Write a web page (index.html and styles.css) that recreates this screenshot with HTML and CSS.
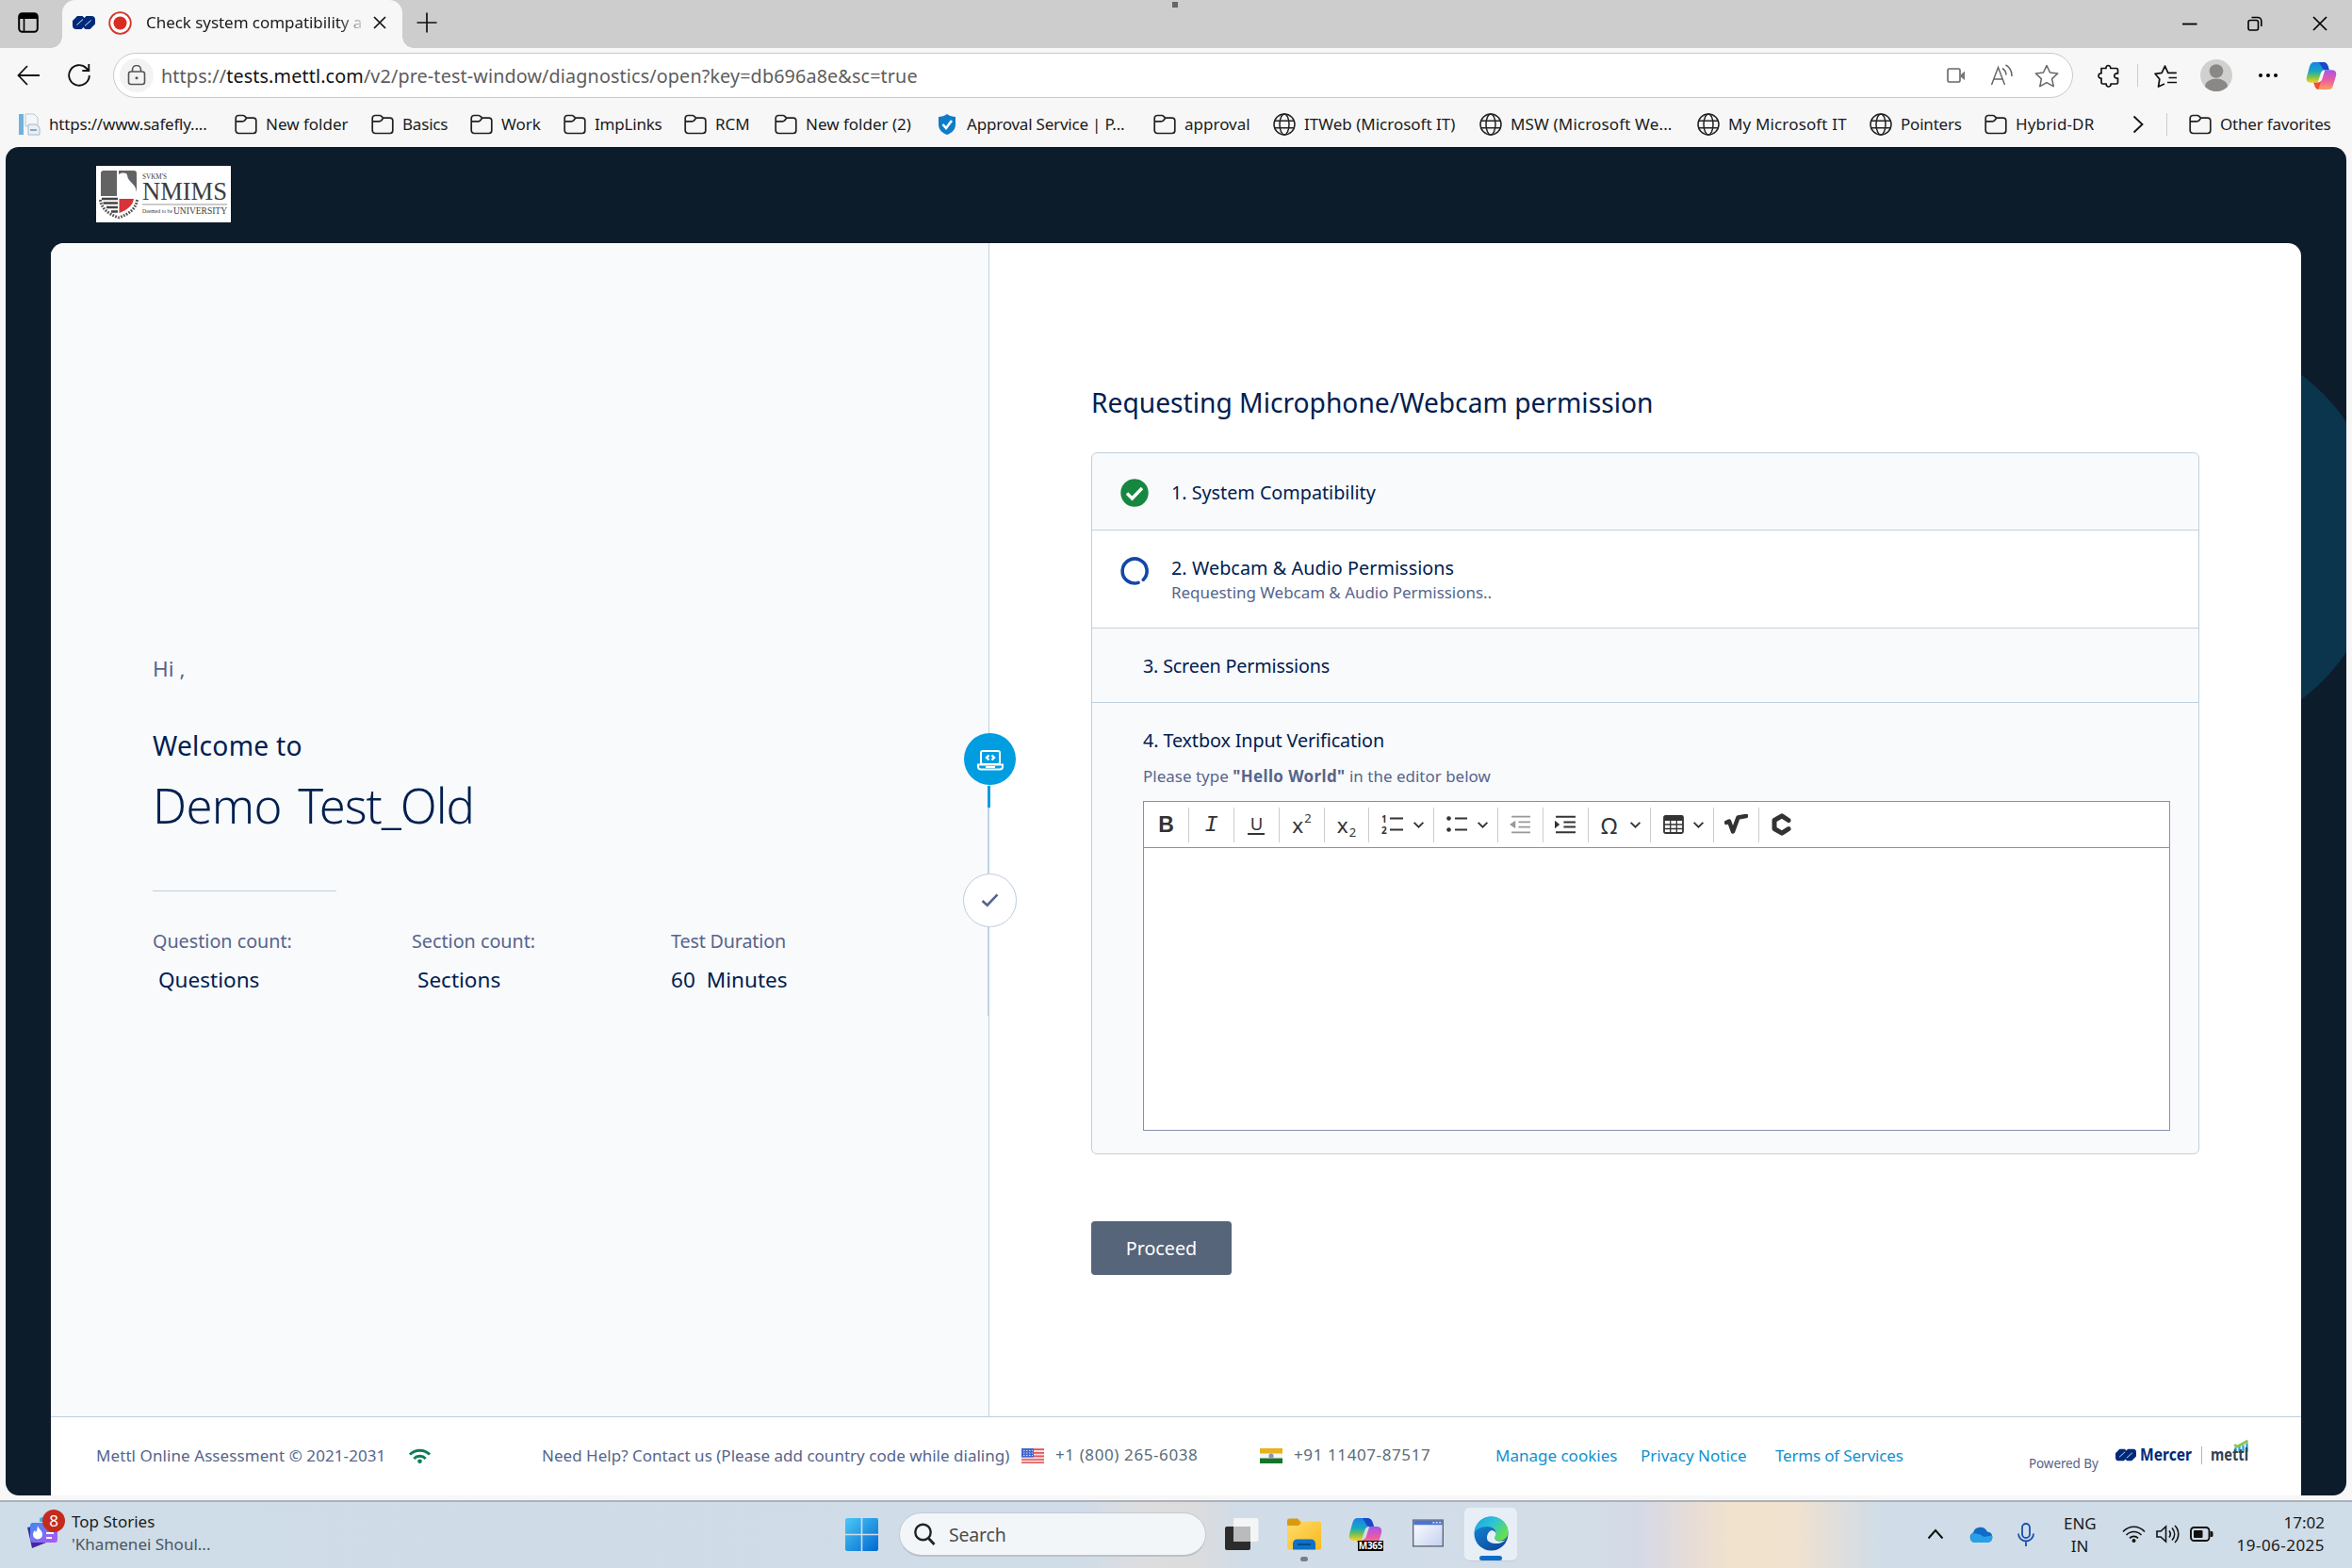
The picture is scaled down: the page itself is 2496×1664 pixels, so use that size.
FILE: index.html
```html
<!DOCTYPE html>
<html lang="en">
<head>
<meta charset="utf-8">
<title>Check system compatibility</title>
<link rel="stylesheet" href="styles.css">
</head>
<body>
<svg class="defs" width="0" height="0">
  <defs>
    <linearGradient id="gBlue" x1="0" y1="0" x2="1" y2="1"><stop offset="0" stop-color="#4cc8f7"/><stop offset="1" stop-color="#0069cf"/></linearGradient>
    <linearGradient id="gCopA" x1="0" y1="0" x2="0" y2="1"><stop offset="0" stop-color="#1c7fe8"/><stop offset=".45" stop-color="#17a9c0"/><stop offset=".72" stop-color="#7cc24a"/><stop offset="1" stop-color="#fbd02a"/></linearGradient>
    <linearGradient id="gCopB" x1="0" y1="0" x2="0" y2="1"><stop offset="0" stop-color="#a457e8"/><stop offset=".5" stop-color="#ea5aa5"/><stop offset="1" stop-color="#ffa05a"/></linearGradient>
    <linearGradient id="gEdge" x1="0" y1="0" x2="1" y2=".6"><stop offset="0" stop-color="#1f9fe0"/><stop offset=".5" stop-color="#2cc3d8"/><stop offset="1" stop-color="#66e04c"/></linearGradient>
    <linearGradient id="gEdge2" x1="0" y1="0" x2=".6" y2="1"><stop offset="0" stop-color="#1590e0"/><stop offset="1" stop-color="#0c4ea0"/></linearGradient>
    <linearGradient id="gNews" x1="0" y1="0" x2="1" y2="1"><stop offset="0" stop-color="#3d8bf2"/><stop offset="1" stop-color="#b455f5"/></linearGradient>
    <linearGradient id="gFold" x1="0" y1="0" x2="1" y2="1"><stop offset="0" stop-color="#ffdc6b"/><stop offset="1" stop-color="#f8b91e"/></linearGradient>
    <linearGradient id="gWin" x1="0" y1="0" x2="1" y2="1"><stop offset="0" stop-color="#fff"/><stop offset="1" stop-color="#c3d0f0"/></linearGradient>
    <symbol id="folder" viewBox="0 0 24 24"><path d="M1.2 5.5a3 3 0 0 1 3-3h4.6c1 0 1.500.4 2.200 1.100l1.500 1.500h7.300a3 3 0 0 1 3 3v10.400a3 3 0 0 1-3 3H4.200a3 3 0 0 1-3-3zM1.200 8.800h7.300c.9 0 1.500-.3 2.100-.9l2-2.400" fill="none" stroke="#222" stroke-width="1.7" stroke-linejoin="round"/></symbol>
    <symbol id="globe" viewBox="0 0 24 24"><g fill="none" stroke="#222" stroke-width="1.5"><circle cx="12" cy="12" r="11"/><ellipse cx="12" cy="12" rx="5" ry="11"/><path d="M2 8.300h20M2 15.700h20"/></g></symbol>
    <symbol id="mercer" viewBox="0 0 24 14"><path d="M5 0h5.500L12.500 2 14.500 0H20a4 4 0 0 1 4 4v4.500L18.500 14H13.500l-2-2-2 2H4a4 4 0 0 1-4-4V5z" fill="#00297a"/><path d="M4.500 9.500L11 3.500M13 10.500L19.500 4.500" stroke="#fff" stroke-width=".9" fill="none"/></symbol>
    <symbol id="copilot" viewBox="0 0 34 32"><path d="M9 1h10c3 0 4.500 2 5.500 5l1 3.500h-4c-3 0-4.500 1.500-5.300 4L13 23.500H5.500C1.500 23.500 0 20.500 1 17l3-11c1-3.500 2.500-5 5-5z" fill="url(#gCopA)"/><path d="M14 1h5c3 0 4.500 2 5.500 5l1 3.500h-4c-2 0-3.500-1-4.200-3.500z" fill="#1749c8"/><path d="M25 31H15c-3 0-4.500-2-5.500-5l-1-2.500h4c3 0 4.500-1.500 5.300-4L21 9.500h7.500C32.500 9.500 34 12.500 33 16l-3 10c-1 3.500-2.500 5-5 5z" fill="url(#gCopB)"/><path d="M8.500 23.500h4c2.500 0 3.500-1 4.500-2.500L13.500 31C11.500 30.500 10.300 29 9.500 26z" fill="#f0502c"/></symbol>
    <symbol id="chev" viewBox="0 0 12 8"><path d="M1.500 1.500L6 6l4.500-4.500" fill="none" stroke="#333" stroke-width="1.700"/></symbol>
  </defs>
</svg>

<header class="tabbar">
  <svg class="workspaces" viewBox="0 0 22 22"><rect x="1.200" y="1.200" width="19.600" height="19.600" rx="3.500" fill="none" stroke="#000" stroke-width="2"/><path d="M1 7V4a3 3 0 0 1 3-3h14a3 3 0 0 1 3 3v3z"/><path d="M6.500 7v14" stroke="#000" stroke-width="1.600"/></svg>
  <div class="tab">
    <svg class="fav" viewBox="0 0 24 14"><use href="#mercer"/></svg>
    <svg class="rec" viewBox="0 0 25 25"><circle cx="12.500" cy="12.500" r="11.300" fill="#fff" stroke="#d8352a" stroke-width="1.800"/><circle cx="12.500" cy="12.500" r="7" fill="#d92c20"/></svg>
    <span class="tab-title">Check system compatibility a</span>
    <svg class="tab-x" viewBox="0 0 14 14"><path d="M1 1l12 12M13 1L1 13" stroke="#111" stroke-width="1.700"/></svg>
  </div>
  <svg class="plus" viewBox="0 0 22 22"><path d="M11 .5v21M.5 11h21" stroke="#111" stroke-width="1.700"/></svg>
  <span class="top-mark"></span>
  <div class="winbtns">
    <svg viewBox="0 0 16 16"><path d="M0 8.500h15.500" stroke="#000" stroke-width="1.800"/></svg>
    <svg viewBox="0 0 16 16"><g fill="none" stroke="#000" stroke-width="1.600"><rect x="1" y="4.500" width="10.500" height="10.500" rx="2"/><path d="M4.500 1.500H11a3.800 3.800 0 0 1 3.800 3.800V11"/></g></svg>
    <svg viewBox="0 0 16 16"><path d="M1 1l14 14M15 1L1 15" stroke="#000" stroke-width="1.700"/></svg>
  </div>
</header>

<div class="toolbar">
  <svg class="back" viewBox="0 0 25 22"><path d="M11 1L1.500 11 11 21M1.500 11H24" fill="none" stroke="#111" stroke-width="1.800"/></svg>
  <svg class="reload" viewBox="0 0 26 26"><path d="M23.800 13A10.800 10.800 0 1 1 20.500 5.200L23 7.500M23.300 1v7h-7" fill="none" stroke="#111" stroke-width="1.900"/></svg>
  <div class="url">
    <span class="lock"><svg viewBox="0 0 20 22"><g fill="none" stroke="#555" stroke-width="1.600"><rect x="1.500" y="7" width="17" height="13.500" rx="2.500"/><path d="M5.500 7V5a4.500 4.500 0 0 1 9 0v2"/></g><circle cx="10" cy="13.700" r="1.500" fill="#555"/></svg></span>
    <span class="url-text">https://<b>tests.mettl.com</b>/v2/pre-test-window/diagnostics/open?key=db696a8e&amp;sc=true</span>
    <svg class="cam" viewBox="0 0 20 16"><rect x="1" y="1" width="13" height="14" rx="1.500" fill="none" stroke="#666" stroke-width="1.600"/><path d="M14.500 7.500L19 3.500v9.500l-4.500-3.500z" fill="#777"/></svg>
    <svg class="aloud" viewBox="0 0 25 24"><path d="M1.500 22L8.500 3.500 15.500 22M4 16h9" fill="none" stroke="#666" stroke-width="1.500"/><path d="M13 4.500c2.500 1.500 3.800 4 4 7M16.500 1c4 2 6.500 6 6.500 12" fill="none" stroke="#666" stroke-width="1.500"/></svg>
    <svg class="star" viewBox="0 0 26 25"><path d="M13 1.500l3.500 7.500 8.200 1-6.100 5.600 1.600 8.100-7.200-4-7.200 4 1.600-8.100L1.300 10l8.200-1z" fill="none" stroke="#666" stroke-width="1.500" stroke-linejoin="round"/></svg>
  </div>
  <svg class="puzzle" viewBox="0 0 24 25"><path d="M4 4.500h5c-.5-4 5-4 4.800 0H20a1.500 1.500 0 0 1 1.500 1.500v4c-5-.8-5 5.600 0 5v4.500a1.500 1.500 0 0 1-1.500 1.500h-6c.5 4-5.300 4-4.800 0H5.500A1.500 1.500 0 0 1 4 19.500V15c-4 .5-4-5.500 0-5z" fill="none" stroke="#111" stroke-width="1.700" stroke-linejoin="round"/></svg>
  <span class="vsep"></span>
  <svg class="favs" viewBox="0 0 25 25"><path d="M11 21l-6.500 3 1.300-8L1 10.300l7.200-1L11.500 2l3.300 7.300h9M15.500 14.500H24M14 19.500h10" fill="none" stroke="#111" stroke-width="1.700" stroke-linejoin="round"/></svg>
  <svg class="avatar" viewBox="0 0 34 34"><circle cx="17" cy="17" r="17" fill="#d2d0ce"/><circle cx="17" cy="12.500" r="7.300" fill="#8a8886"/><path d="M5 29a12 8.500 0 0 1 24 0 17 17 0 0 1-24 0z" fill="#8a8886"/></svg>
  <svg class="dots" viewBox="0 0 22 6"><circle cx="3" cy="3" r="2"/><circle cx="11" cy="3" r="2"/><circle cx="19" cy="3" r="2"/></svg>
  <svg class="cop" viewBox="0 0 34 32"><use href="#copilot"/></svg>
</div>

<nav class="bookmarks">
  <a class="tight"><svg viewBox="0 0 24 24"><path d="M1 1h5v22H1z" fill="#6fb2dd"/><path d="M8 1h9l4 4v9H8z" fill="#f4f7fa" stroke="#b9c6d2"/><path d="M11 12h8l4 3v8H11z" fill="#e9eff5" stroke="#a9b8c6"/><path d="M13 18h7" stroke="#6a8fb0" stroke-width="1.500"/></svg>https://www.safefly....</a>
  <a><svg><use href="#folder"/></svg>New folder</a>
  <a class="tight"><svg><use href="#folder"/></svg>Basics</a>
  <a><svg><use href="#folder"/></svg>Work</a>
  <a class="tight"><svg><use href="#folder"/></svg>ImpLinks</a>
  <a><svg><use href="#folder"/></svg>RCM</a>
  <a><svg><use href="#folder"/></svg>New folder (2)</a>
  <a class="tight"><svg viewBox="0 0 24 24"><path d="M12 1c3 2.200 6 3 9 3v8c0 6-4 9-9 11-5-2-9-5-9-11V4c3 0 6-.8 9-3z" fill="#0f7cc9"/><path d="M7.500 12l3.500 4 6-8" fill="none" stroke="#fff" stroke-width="2.600"/></svg>Approval Service | P...</a>
  <a><svg><use href="#folder"/></svg>approval</a>
  <a><svg><use href="#globe"/></svg>ITWeb (Microsoft IT)</a>
  <a class="loose"><svg><use href="#globe"/></svg>MSW (Microsoft We...</a>
  <a class="loose"><svg><use href="#globe"/></svg>My Microsoft IT</a>
  <a class="tight"><svg><use href="#globe"/></svg>Pointers</a>
  <a class="loose"><svg><use href="#folder"/></svg>Hybrid-DR</a>
  <a><svg class="more" viewBox="0 0 12 20"><path d="M1.500 1.500L10.500 10l-9 8.500" fill="none" stroke="#111" stroke-width="1.800"/></svg></a>
  <a class="other tight"><svg><use href="#folder"/></svg>Other favorites</a>
</nav>

<main class="page">
  <div class="blob"></div>
  <div class="brand">
    <svg class="nmims" viewBox="0 0 143 60">
      <rect width="143" height="60" fill="#fff"/>
      <path d="M5 8q0-3 3-3h14v27H5z" fill="#636363"/>
      <path d="M24 5h16q3 0 3 3v20c-1-10-9-10-10-18-.5-3-5-3-9-1z" fill="#636363"/>
      <path d="M24.500 35H40c-1 7-7 12-15.500 15z" fill="#d6333a"/>
      <path d="M6 35h17M7.500 39.500h15.500M11 44h12M16 48.500h7" stroke="#444" stroke-width="2.400"/>
      <path d="M4.500 36c1 9 8 15 19.500 19M43.500 36c-1 9-8 15-19.500 19" fill="none" stroke="#555" stroke-width="3" stroke-dasharray="1.800 1.300"/>
      <text x="49" y="14" font-size="8" textLength="26" lengthAdjust="spacingAndGlyphs">SVKM'S</text>
      <text x="49" y="36" font-size="27" textLength="90" lengthAdjust="spacingAndGlyphs">NMIMS</text>
      <path d="M49 41h90" stroke="#999" stroke-width="1"/>
      <text x="49" y="50" font-size="6" textLength="32" lengthAdjust="spacingAndGlyphs">Deemed to be</text>
      <text x="82" y="51" font-size="9.500" textLength="57" lengthAdjust="spacingAndGlyphs">UNIVERSITY</text>
    </svg>
  </div>
  <div class="card">
    <section class="intro">
      <p class="hi">Hi ,</p>
      <p class="welcome">Welcome to</p>
      <h1>Demo <span>Test_Old</span></h1>
      <hr>
      <dl class="stats">
        <div><dt>Question count:</dt><dd class="ind">Questions</dd></div>
        <div><dt>Section count:</dt><dd class="ind">Sections</dd></div>
        <div><dt class="td">Test Duration</dt><dd>60<span>Minutes</span></dd></div>
      </dl>
    </section>
    <div class="steps">
      <span class="node active"><svg viewBox="0 0 28 22"><g fill="none" stroke="#fff" stroke-width="2"><rect x="4" y="1" width="20" height="14" rx="2"/><path d="M1 15.500h26v2a3 3 0 0 1-3 3H4a3 3 0 0 1-3-3zM9 18h10"/><path d="M12.500 5.500L10 8l2.500 2.500M15.500 5.500L18 8 15.500 10.500" stroke-width="2.400"/></g></svg></span>
      <span class="seg blue"></span><span class="seg pale"></span>
      <span class="node"><svg viewBox="0 0 20 16"><path d="M1.500 8.500L7 13.500 18.500 1.500" fill="none" stroke="#56658c" stroke-width="2.800"/></svg></span>
      <span class="seg tail"></span>
    </div>
    <section class="checks">
      <h2>Requesting Microphone/Webcam permission</h2>
      <div class="list">
        <div class="row r1"><svg viewBox="0 0 30 30"><circle cx="15" cy="15" r="14.700" fill="#16873e"/><path d="M7 15.500l5.500 5.500L23 10" fill="none" stroke="#fff" stroke-width="3.400"/></svg><p>1. System Compatibility</p></div>
        <div class="row r2"><svg viewBox="0 0 30 30"><path d="M24.300 24.200A13 13 0 1 0 19 27.400" fill="none" stroke="#1546a8" stroke-width="3.600" stroke-linecap="round"/></svg><div><p class="wa">2. Webcam &amp; Audio Permissions</p><small>Requesting Webcam &amp; Audio Permissions..</small></div></div>
        <div class="row r3"><p class="sp">3. Screen Permissions</p></div>
        <div class="row r4">
          <p class="tv">4. Textbox Input Verification</p>
          <small>Please type <b>"Hello World"</b> in the editor below</small>
          <div class="editor">
            <div class="ed-bar">
              <span class="t-b">B</span>
              <span class="t-i">I</span>
              <span class="t-u">U</span>
              <span class="t-x">x<sup>2</sup></span>
              <span class="t-x">x<sub>2</sub></span>
              <span class="w"><svg class="l" viewBox="0 0 23 22"><path d="M9 4.500h14M9 16.500h14" stroke="#333" stroke-width="2"/><text x="0" y="8.500" font-size="10" font-weight="700">1</text><text x="0" y="20.500" font-size="10" font-weight="700">2</text></svg><svg class="c"><use href="#chev"/></svg></span>
              <span class="w"><svg class="l" viewBox="0 0 23 22"><path d="M9 4.500h13M9 16.500h13" stroke="#333" stroke-width="2"/><circle cx="2.500" cy="4.500" r="2.300"/><circle cx="2.500" cy="16.500" r="2.300"/></svg><svg class="c"><use href="#chev"/></svg></span>
              <span><svg class="l dim" viewBox="0 0 22 20"><path d="M2 2h19M9 7.500h12M9 12.500h12M2 18h19" stroke="#333" stroke-width="1.800"/><path d="M6 6v8L0 10z"/></svg></span>
              <span><svg class="l" viewBox="0 0 22 20"><path d="M1 2h20M9 7.500h12M9 12.500h12M1 18h20" stroke="#333" stroke-width="1.900"/><path d="M0 6v8l5-4z"/></svg></span>
              <span class="w t-o">Ω<svg class="c"><use href="#chev"/></svg></span>
              <span class="w"><svg class="tb" viewBox="0 0 22 20"><rect x="1" y="1" width="20" height="18" rx="1.500" fill="none" stroke="#333" stroke-width="1.800"/><path d="M1 1h20v5H1z"/><path d="M1 10h20M1 14.500h20M7.700 6v13M14.300 6v13" stroke="#333" stroke-width="1.300"/></svg><svg class="c"><use href="#chev"/></svg></span>
              <span><svg class="l sq" viewBox="0 0 25 22"><path d="M2 9l3-1.500 4 11L14.500 3.500 23 2" fill="none" stroke="#333" stroke-width="4.500" stroke-linecap="round" stroke-linejoin="round"/></svg></span>
              <span class="last"><svg class="l ch" viewBox="0 0 22 24"><path d="M19 7.500L12 2.800 4 7.500v9l8 4.700 7-4.500" fill="none" stroke="#333" stroke-width="5" stroke-linecap="round" stroke-linejoin="round"/></svg></span>
            </div>
          </div>
        </div>
      </div>
      <button>Proceed</button>
    </section>
  </div>
  <footer class="foot">
    <span class="moa">Mettl Online Assessment © 2021-2031</span>
    <svg class="fwifi" viewBox="0 0 24 17"><g fill="none" stroke="#0a7f55" stroke-width="3"><path d="M1 6.500C7 .5 17 .5 23 6.500M5.500 11c3.500-3.600 9.500-3.600 13 0"/></g><circle cx="12" cy="14" r="2.400" fill="#0a7f55"/></svg>
    <span class="help">Need Help? Contact us (Please add country code while dialing)</span>
    <svg class="flag" viewBox="0 0 24 16"><rect width="24" height="16" fill="#f7dfe0"/><path d="M0 1.200h24M0 4.800h24M0 8.400h24M0 12h24M0 15.300h24" stroke="#e2555a" stroke-width="1.700"/><rect width="13" height="9.500" fill="#4466d0"/><path d="M2 2.500h10M2 5h10M2 7.500h10" stroke="#cfd9f7" stroke-width="1" stroke-dasharray="1.500 1.500"/></svg>
    <span class="ph">+1 (800) 265-6038</span>
    <svg class="flag" viewBox="0 0 24 16"><rect width="24" height="16" fill="#f4f4f2"/><rect width="24" height="5.500" fill="#e8b21c"/><rect y="10.500" width="24" height="5.500" fill="#14752a"/><circle cx="12" cy="8" r="2.600" fill="#8b93b8"/></svg>
    <span class="ph">+91 11407-87517</span>
    <a>Manage cookies</a>
    <a>Privacy Notice</a>
    <a class="tos">Terms of Services</a>
    <span class="pw">Powered By</span>
    <svg class="logos" viewBox="0 0 142 30"><svg x="0" y="7" width="22" height="14" viewBox="0 0 24 14"><use href="#mercer"/></svg><text x="26" y="20" font-size="17" textLength="55" lengthAdjust="spacingAndGlyphs" fill="#00297a">Mercer</text><path d="M91.500 5v19" stroke="#aab4c8" stroke-width="1"/><path d="M127.500 11V6M131.500 11V4.500M135.500 11V3.500M139.500 11V1.500" stroke="#2aa5d8" stroke-width="2.400"/><text x="101" y="20" font-size="17" textLength="40" lengthAdjust="spacingAndGlyphs" fill="#32404f">mettl</text><path d="M126 3.500l3.500 1.500L140.500-1" fill="none" stroke="#8fc04f" stroke-width="2.600"/></svg>
  </footer>
</main>

<div class="taskbar">
  <div class="widget">
    <svg viewBox="0 0 36 42"><path d="M14 8l12-4v8H14z" fill="#36b4e8"/><path d="M1 18l9-2 16 16-20 8z" fill="#3f2a9e"/><rect x="4" y="13" width="29" height="21" rx="3" fill="url(#gNews)"/><path d="M12 16c1 4 5 5 5 9.500a5 5 0 0 1-10 0c0-2 1-3 2-4.500l1 2c1.500-2 1.500-4 2-7z" fill="#fff"/><path d="M21 24h8M21 29h6" stroke="#fff" stroke-width="2"/></svg>
    <span class="badge">8</span>
    <p>Top Stories<br><i>'Khamenei Shoul...</i></p>
  </div>
  <div class="apps">
    <svg class="start" viewBox="0 0 35 35"><path d="M0 2a2 2 0 0 1 2-2h14.700v16.700H0zM18.300 0H33a2 2 0 0 1 2 2v14.700H18.300zM0 18.300h16.700V35H2a2 2 0 0 1-2-2zM18.300 18.300H35V33a2 2 0 0 1-2 2H18.300z" fill="url(#gBlue)"/></svg>
    <div class="search"><svg viewBox="0 0 24 24"><circle cx="10.500" cy="10" r="8.200" fill="none" stroke="#222" stroke-width="2.400"/><path d="M16 16l6.500 7" stroke="#222" stroke-width="2.800"/></svg>Search</div>
    <svg class="tview" viewBox="0 0 36 36"><rect x="0" y="10" width="27" height="25" rx="2" fill="#2c2c2c"/><rect x="9" y="1" width="26.500" height="25" rx="2" fill="#f6f6f6" opacity=".95"/><rect x="9" y="10" width="18" height="16" fill="#b9bbbd"/></svg>
    <div class="expl"><svg viewBox="0 0 36 36"><path d="M0 4a2.500 2.500 0 0 1 2.500-2.500H11l4 4h10V12H0z" fill="#d99a10"/><rect y="4.500" width="36" height="30" rx="2.500" fill="url(#gFold)"/><path d="M0 4h12l3 2-3 3H0z" fill="#d99a10"/><path d="M6 34.500V28a4.500 4.500 0 0 1 4.500-4.500h15A4.500 4.500 0 0 1 30 28v6.500z" fill="#0f72c4"/><path d="M11 29h14" stroke="#0a4a90" stroke-width="2"/></svg><i></i></div>
    <div class="m365"><svg viewBox="0 0 34 32"><use href="#copilot"/></svg><b>M365</b></div>
    <svg class="win" viewBox="0 0 34 30"><rect x=".7" y=".7" width="32.600" height="28.600" fill="url(#gWin)" stroke="#5c6675" stroke-width="1.400"/><rect x="1.400" y="1.400" width="31.200" height="4.600" fill="#4a74d8"/><path d="M22 3.500h9" stroke="#cfdcff" stroke-width="1.500" stroke-dasharray="2 1.500"/></svg>
    <div class="edge"><svg viewBox="0 0 37 37"><circle cx="18.500" cy="18.500" r="18" fill="url(#gEdge2)"/><path d="M.8 17C2 6.500 9.500.5 18.500.5 29 .5 36.500 8 36.500 16.500c0 6-4 9.500-9 9.500-3.500 0-6-1-6-3 0-1.500 2-2 2-5 0-4-4-7-9-7-6.500 0-12 3-13.700 6z" fill="url(#gEdge)"/><path d="M14 23c0-4 2-7 5-8 3 .5 4.500 2 4.500 4 0 1.800-1.500 2.500-1.500 4 0 2 2.500 3.500 6 3.500 3 0 5-.8 6.500-2-2.500 2.500-6 4.500-10 4.500-6 0-10.500-2-10.500-6z" fill="#e6eef8"/></svg><i></i></div>
  </div>
  <div class="tray">
    <svg class="up" viewBox="0 0 18 12"><path d="M1.500 10.500L9 2l7.500 8.500" fill="none" stroke="#111" stroke-width="2"/></svg>
    <svg class="cloud" viewBox="0 0 25 17"><path d="M5.500 17A5.500 5.500 0 0 1 4 6.500 8 8 0 0 1 19 5.500a5.800 5.800 0 0 1 .5 11.500z" fill="#0f6cc8"/><path d="M5.500 17A5.500 5.500 0 0 1 3 7.500c6-1 10 2 12.500 3.500L24 9.500a5.700 5.700 0 0 1-4.500 7.500z" fill="#28a0e8"/></svg>
    <svg class="mic" viewBox="0 0 18 25"><g fill="none" stroke="#1a4fb0" stroke-width="1.800"><rect x="5" y="1" width="8" height="15" rx="4"/><path d="M1 11.500a8 8 0 0 0 16 0M9 20v5"/></g></svg>
    <p class="lang">ENG<br>IN</p>
    <svg class="twifi" viewBox="0 0 25 18"><g fill="none" stroke="#111" stroke-width="1.700"><path d="M1 6.500C7.500-.5 17.500-.5 24 6.500M4.500 10c4.500-4.700 11.500-4.700 16 0M8 13.300c2.500-2.500 6.500-2.500 9 0"/></g><circle cx="12.500" cy="16" r="2"/></svg>
    <svg class="spk" viewBox="0 0 25 20"><g fill="none" stroke="#111" stroke-width="1.600"><path d="M1 7h4l5.500-5v16L5 13H1zM14 6.500c1.500 2 1.500 5 0 7M17 3.500c3.500 4 3.500 9 0 13M20 1c5 5 5 13 0 18"/></g></svg>
    <svg class="bat" viewBox="0 0 25 16"><rect x="1" y="1" width="19.500" height="14" rx="3.500" fill="none" stroke="#111" stroke-width="1.900"/><rect x="4" y="4" width="9.500" height="8" rx="1"/><path d="M21.500 5h1.500a1.500 1.500 0 0 1 1.500 1.500v3A1.500 1.500 0 0 1 23 11h-1.500z"/></svg>
    <p class="clock">17:02<br><span>19-06-2025</span></p>
  </div>
</div>
</body>
</html>
```
FILE: styles.css
```css
* { box-sizing: border-box; margin: 0; padding: 0; }
body {
  width: 2496px; height: 1664px; overflow: hidden;
  display: flex; flex-direction: column;
  background: #f7f7f7; color: #1b1b1b;
  font-family: "Noto Sans", "Open Sans", sans-serif; font-size: 17px;
}
svg { flex: none; display: block; }
span, p, a, small, dt, dd, h1, h2 { white-space: pre; }
.defs { position: absolute; }

/* Tab strip */
.tabbar { height: 51px; background: #cdcdcd; display: flex; position: relative; flex: none; }
.workspaces { width: 22px; height: 22px; margin: 13px 25px 0 19px; }
.tab {
  width: 361px; height: 51px; background: #f7f7f7; border-radius: 14px 14px 0 0;
  display: flex; align-items: center; padding: 0 17px 3px 11px; position: relative;
}
.tab::before, .tab::after { content: ""; position: absolute; bottom: 0; width: 12px; height: 12px; }
.tab::before { left: -12px; background: radial-gradient(circle at 0 0, transparent 11.5px, #f7f7f7 12px); }
.tab::after { right: -12px; background: radial-gradient(circle at 100% 0, transparent 11.5px, #f7f7f7 12px); }
.fav { width: 24px; height: 14px; }
.rec { width: 25px; height: 25px; margin: 0 15px 0 14px; }
.tab-title {
  width: 232px; overflow: hidden; margin-right: 9px; line-height: 28px; letter-spacing: -.05px;
  background: linear-gradient(90deg, #1b1b1b 205px, #1b1b1b22 230px); -webkit-background-clip: text; background-clip: text; color: transparent;
}
.tab-x { width: 14px; height: 14px; }
.plus { width: 22px; height: 22px; margin: 13px 0 0 15px; }
.top-mark { position: absolute; left: 1244px; top: 2px; width: 6px; height: 6px; background: #666; }
.winbtns { margin-left: auto; display: flex; gap: 53px; padding: 17px 26px 0 0; }
.winbtns svg { width: 16px; height: 16px; }

/* Address row */
.toolbar { height: 58px; display: flex; align-items: center; padding: 2px 16px 2px 18px; flex: none; }
.back { width: 25px; height: 22px; }
.reload { width: 26px; height: 26px; margin: 0 23px 0 28px; }
.url {
  width: 2080px; height: 48px; border: 1.500px solid #c9c9c9; border-radius: 24px; background: #fff;
  display: flex; align-items: center; padding-left: 6px; font-size: 19.740px; letter-spacing: .14px; color: #5d5d5d;
}
.lock { width: 36px; height: 36px; border-radius: 50%; background: #f3f3f3; display: grid; place-items: center; margin-right: 8px; }
.lock svg { width: 20px; height: 22px; }
.url-text { width: 1895px; }
.url b { font-weight: 400; color: #111; }
.cam { width: 20px; height: 16px; }
.aloud { width: 25px; height: 24px; margin: 0 22px 0 26px; }
.star { width: 26px; height: 25px; }
.puzzle { width: 24px; height: 25px; margin-left: 26px; }
.vsep { width: 1px; height: 24px; background: #ccc; margin: 0 17px 0 18px; }
.favs { width: 25px; height: 25px; }
.avatar { width: 34px; height: 34px; margin: 0 27px 0 24px; }
.dots { width: 22px; height: 6px; }
.cop { width: 33px; height: 31px; margin-left: 29px; }

/* Favourites row */
.bookmarks {
  height: 47px; flex: none; display: grid; align-items: center; padding: 0 0 1px 19px;
  grid-template-columns: 230px 145px 105px 99px 128px 96px 171px 231px 127px 219px 231px 183px 122px 157px 36px 1fr;
}
.bookmarks a { display: flex; align-items: center; gap: 9px; line-height: 24px; }
.bookmarks .tight { letter-spacing: -.2px; }
.bookmarks .loose { letter-spacing: .15px; }
.bookmarks svg { width: 24px; height: 24px; }
.bookmarks .more { width: 12px; height: 20px; }
.bookmarks .other { border-left: 1px solid #ccc; padding-left: 23px; }

/* Page */
.page {
  height: 1431px; margin: 0 6px; flex: none; border-radius: 14px; background: #0d1c2b;
  overflow: hidden; position: relative; padding: 0 48px; display: flex; flex-direction: column;
}
.blob { position: absolute; width: 432px; height: 432px; border-radius: 50%; left: 2090px; top: 198px; background: #0b344d; }
.brand { height: 102px; padding: 20px 0 0 48px; flex: none; }
.nmims { width: 143px; height: 60px; font-family: "Liberation Serif", serif; fill: #3c3c3c; }
.card { height: 1245px; flex: none; background: #fff; border-radius: 14px 14px 0 0; display: flex; position: relative; overflow: hidden; }
.intro { width: 996px; background: #f9fafc; border-right: 1px solid #bfd0de; padding: 437px 0 0 108px; color: #00204f; }
.hi { font-size: 22.560px; line-height: 30px; color: #56658c; }
.welcome { font-size: 28.200px; line-height: 40px; letter-spacing: .25px; margin-top: 46px; }
h1 { font-weight: 300; font-size: 50.760px; line-height: 70px; letter-spacing: -.65px; word-spacing: 5px; margin-top: 9px; }
h1 span { letter-spacing: -1.050px; }
hr { border: 0; height: 1px; width: 195px; background: #bccfdb; margin-top: 55px; }
.stats { display: grid; grid-template-columns: repeat(3, 275px); margin-top: 38px; }
dt { font-size: 19.740px; line-height: 30px; color: #56658c; }
.td { letter-spacing: -.17px; }
dd { font-size: 22.560px; line-height: 34px; margin-top: 9px; }
dd.ind { padding-left: 6px; }
dd span { margin-left: 12px; }
.steps { position: absolute; left: 968px; top: 520px; width: 57px; display: flex; flex-direction: column; align-items: center; }
.node { width: 57px; height: 57px; border-radius: 50%; border: 1px solid #bfccdd; background: #fff; display: grid; place-items: center; }
.node svg { width: 19px; height: 15px; }
.node.active { width: 55px; height: 55px; background: #009de0; border: 0; margin-bottom: 1px; }
.node.active svg { width: 28px; height: 22px; margin-top: 2px; }
.seg { width: 2px; background: #bdd3e6; margin-right: 3px; }
.seg.blue { width: 3px; height: 23px; background: #009de0; }
.seg.pale { height: 70px; }
.seg.tail { height: 94px; }
.checks { padding: 149px 0 0 108px; color: #00204f; }
h2 { font-weight: 400; font-size: 28.200px; line-height: 40px; }
.list { width: 1176px; height: 745px; margin-top: 33px; border: 1px solid #bfd0de; border-radius: 6px; background: #f9fafc; overflow: hidden; font-size: 19.740px; }
.row { border-bottom: 1px solid #bfd0de; display: flex; padding-left: 30px; }
.row p { line-height: 28px; }
.row svg { width: 30px; height: 30px; margin-right: 24px; }
.r1 { height: 82px; align-items: center; padding-top: 3px; }
.r2 { height: 104px; background: #fff; padding-top: 26px; }
.row.r2 > svg { margin-top: 2px; }
.wa { letter-spacing: .07px; }
.r3 { height: 79px; align-items: center; padding: 2px 0 0 54px; }
.sp { letter-spacing: -.18px; }
.tv { letter-spacing: -.1px; }
.row.r4 { display: block; border: 0; padding: 26px 30px 0 54px; }
small { display: block; font-size: 16.920px; line-height: 24px; margin-top: 0; color: #56658c; }
.r4 small { margin-top: 12px; letter-spacing: .04px; }
small b { letter-spacing: .4px; }
.editor { margin-top: 14px; height: 350px; border: 1px solid #8690ad; background: #fff; }
.ed-bar {
  height: 49px; border-bottom: 1px solid #8690ad; display: grid; align-items: center; color: #333;
  grid-template-columns: 48px 48px 48px 48px 47px 69px 68px 48px 48px 66px 67px 48px 46px;
}
.ed-bar span { height: 37px; border-right: 1.500px solid #ccc; display: flex; align-items: center; justify-content: center; line-height: 37px; }
.ed-bar span.last { border: 0; }
.ed-bar span.w { justify-content: space-between; padding: 0 9px 0 13px; }
.ed-bar svg { margin: 0; fill: #333; }
.ed-bar .l { width: 23px; height: 22px; }
.ed-bar .l.sq { width: 25px; height: 22px; }
.ed-bar .l.ch { width: 22px; height: 24px; margin-right: 1px; }
.ed-bar .tb { width: 22px; height: 20px; }
.ed-bar .c { width: 13px; height: 9px; }
.dim { opacity: .5; }
.ed-bar .t-b { font: 700 23px/37px "Liberation Sans", sans-serif; }
.t-i { font: italic 24px/37px "Liberation Mono", monospace; }
.ed-bar .t-u {
  font-size: 18.500px; padding-bottom: 4px;
  background: linear-gradient(#333, #333) no-repeat 14px 27px / 18px 2px;
}
.t-x { font-size: 22.500px; }
.t-x sup, .t-x sub { font-size: 13px; line-height: 13px; margin-left: 1px; }
.t-x sup { margin-top: -13px; }
.t-x sub { margin-top: 16px; }
.t-o { font-size: 24px; }
button {
  display: block; width: 149px; height: 57px; margin-top: 71px; border: 0; border-radius: 4px;
  background: #566579; color: #fff; font: 19.740px "Noto Sans", sans-serif;
}

/* Page footer */
.foot {
  height: 84px; flex: none; background: #fff; border-top: 1px solid #bfd0de; color: #56658c; line-height: 24px;
  display: grid; align-items: center; padding: 0 0 1px 48px; position: relative;
  grid-template-columns: 332px 141px 509px 36px 217px 36px 214px 154px 143px 269px 92px 1fr;
}
.moa { letter-spacing: .08px; }
.help { letter-spacing: .02px; }
.fwifi { width: 23px; height: 17px; }
.flag { width: 24px; height: 16px; }
.ph { letter-spacing: .6px; margin-top: -2px; color: #5b6b78; }
.foot a { color: #1090cf; }
.foot .tos { letter-spacing: -.18px; }
.pw { font-size: 13.500px; margin-top: 15px; letter-spacing: -.1px; }
.logos { width: 142px; height: 30px; margin-top: -1px; overflow: visible; font-weight: 700; }

/* Taskbar */
.taskbar {
  height: 72px; margin-top: 5px; flex: none; border-top: 2px solid #abb2b8; display: flex; position: relative;
  background: linear-gradient(90deg, #cfdde8 0, #d0dce8 1150px, #dcdde0 1200px, #dddcdc 1260px, #d0dce8 1320px, #d2dde8 1690px, #d5d9e6 1740px, #e5dcd8 1790px, #f1e2cd 1835px, #f1e2cf 1905px, #dfdedb 1950px, #d0dde8 1995px, #cfdde8 2496px);
}
.widget { display: flex; width: 897px; padding: 9px 0 0 28px; position: relative; }
.widget svg { width: 36px; height: 42px; }
.widget p { margin-left: 12px; line-height: 24px; }
.widget i { font-style: normal; color: #4d5661; }
.badge { position: absolute; left: 45px; top: 8px; width: 24px; height: 24px; border-radius: 50%; background: #c42b1c; color: #fff; text-align: center; line-height: 24px; }
.apps { display: flex; }
.start { width: 35px; height: 35px; margin-top: 17px; }
.search {
  width: 326px; height: 47px; margin: 11px 20px 0 22px; border-radius: 24px; background: #f3f6f9; border: 1px solid #c3cbd3; border-bottom: 2px solid #b9c1c9;
  display: flex; align-items: center; font-size: 19.500px; color: #4c4c4c; letter-spacing: -.2px;
}
.search svg { width: 24px; height: 24px; margin: 0 14px; }
.tview { width: 36px; height: 36px; margin-top: 16px; }
.expl { width: 36px; margin: 16px 0 0 30px; }
.expl svg { width: 36px; height: 36px; }
.expl i { display: block; width: 8px; height: 5px; border-radius: 3px; background: #777e86; margin: 6px auto 0; }
.m365 { width: 37px; margin: 17px 0 0 29px; position: relative; }
.m365 svg { width: 36px; height: 34px; margin-top: -1px; }
.m365 b { position: absolute; left: 10px; top: 24px; width: 27px; height: 11px; background: #000; color: #fff; font-size: 10px; line-height: 11px; letter-spacing: -.3px; text-align: center; }
.win { width: 33px; height: 30px; margin: 18px 22px 0 31px; }
.edge { width: 56px; height: 57px; margin-top: 6px; border-radius: 6px; background: #e8eef6; border-bottom: 1px solid #c4ccd4; display: flex; flex-direction: column; align-items: center; padding-top: 9px; }
.edge svg { width: 37px; height: 37px; }
.edge i { width: 24px; height: 5px; border-radius: 3px; background: #0a6cc8; margin-top: 5px; }
.tray { margin-left: auto; display: flex; align-items: center; padding: 0 29px 2px 0; line-height: 24px; fill: #111; }
.up { width: 18px; height: 12px; }
.cloud { width: 25px; height: 17px; margin: 0 26px 0 27px; }
.mic { width: 18px; height: 25px; }
.lang { width: 34px; margin: 1px 28px 0 31px; text-align: center; }
.twifi { width: 25px; height: 18px; }
.spk { width: 25px; height: 20px; margin: 0 11px; }
.bat { width: 25px; height: 16px; }
.clock { width: 94px; margin: 0 0 1px 24px; text-align: right; }
.clock span { letter-spacing: .47px; }
```
